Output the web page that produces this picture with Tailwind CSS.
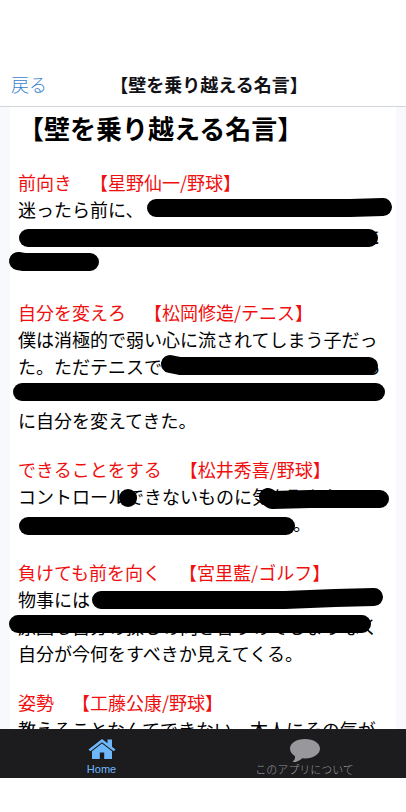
<!DOCTYPE html>
<html lang="ja">
  <head>
    <meta charset="UTF-8" />
    <meta name="viewport" content="width=device-width, initial-scale=1.0" />
    <title>【壁を乗り越える名言】</title>
    <script src="https://cdn.jsdelivr.net/npm/@tailwindcss/browser@4"></script>
  </head>
  <body class="bg-white font-['Noto_Sans_CJK_JP',sans-serif] text-black [text-spacing-trim:space-all]">
    <div class="flex h-screen flex-col pb-[34px]">
      <!-- Navigation bar -->
      <header class="grid grid-cols-[1fr_auto_1fr] items-center border-b border-gray-300 px-[11px] pt-[62px]">
        <a href="#" class="text-lg leading-[44px] font-light text-[#3b82d0]">戻る</a>
        <p class="pl-3 text-lg leading-[44px] font-bold text-[#111116]">【壁を乗り越える名言】</p>
      </header>

      <main class="flex-1 overflow-y-auto bg-[#f8f9fc] px-[10px] [scrollbar-width:none]">
        <article class="relative bg-white px-2 pb-6">
          <h1 class="text-[26px] leading-[42px] font-bold">【壁を乗り越える名言】</h1>

          <div class="mt-5 flex flex-col gap-[22px] text-lg leading-[27px] whitespace-nowrap">
            <section>
              <h2 class="text-[#f00f0f]">前向き　【星野仙一/野球】</h2>
              <p>
                迷ったら前に、<br />
                <span class="inline-block w-[344px]"></span>に<br />
                <br />
              </p>
            </section>
            <section>
              <h2 class="text-[#f00f0f]">自分を変えろ　【松岡修造/テニス】</h2>
              <p>
                僕は消極的で弱い心に流されてしまう子だっ<br />
                た。ただテニスで<span class="inline-block w-[201px]"></span>ら<br />
                <br />
                に自分を変えてきた。
              </p>
            </section>
            <section>
              <h2 class="text-[#f00f0f]">できることをする　【松井秀喜/野球】</h2>
              <p>
                コントロールできないものに気を取られ<br />
                <span class="inline-block w-[275px]"></span>。
              </p>
            </section>
            <section>
              <h2 class="text-[#f00f0f]">負けても前を向く　【宮里藍/ゴルフ】</h2>
              <p>
                物事には<br />
                原因も自分の探しの向き合うのでしょうなく<br />
                自分が今何をすべきか見えてくる。
              </p>
            </section>
            <section>
              <h2 class="text-[#f00f0f]">姿勢　【工藤公康/野球】</h2>
              <p>教えることなんてできない。本人にその気が</p>
            </section>
          </div>

          <!-- Marker strokes over the hidden parts -->
          <svg class="pointer-events-none absolute top-0 left-0 h-full w-full overflow-visible" fill="none" stroke="#000" stroke-width="18" stroke-linecap="round" stroke-linejoin="round" aria-hidden="true">
            <path d="M146 101H340L373 100" />
            <path d="M18 131H359" />
            <path d="M8 154L14 155H80" />
            <path d="M160 257L170 259H359" />
            <path d="M12 285H366" />
            <path d="M118 391h.1" />
            <path d="M258 390L262 393L300 392H370" />
            <path d="M18 419H276" />
            <path d="M91 493H275L325 491L364 490" />
            <path d="M8 517H352" />
          </svg>
        </article>
      </main>

      <!-- Tab bar -->
      <nav class="grid h-[49px] grid-cols-2 bg-[#1c1c1e] pt-[9px] text-[11px] leading-[14px]">
        <a href="#" class="flex flex-col items-center text-[#6fb7fb]">
          <svg class="h-6 w-7" viewBox="0 0 28 24" fill="currentColor" aria-hidden="true">
            <path d="M14 1L0.5 11.5L2.3 13.3L14 4.2L25.7 13.3L27.5 11.5L24 8.7V1.5H19.5V5.2Z" />
            <path d="M14 5.5L4 13.2V21H11.8V14.5H16.2V21H24V13.2Z" />
          </svg>
          <span class="font-['Liberation_Sans',sans-serif]">Home</span>
        </a>
        <a href="#" class="flex flex-col items-center text-[#98989c]">
          <svg class="h-6 w-8" viewBox="0 0 32 24" fill="currentColor" aria-hidden="true">
            <path d="M16 1C24.500 1 31 5.200 31 10.600C31 16.200 24.500 20.500 16 20.500L13.200 20.300C10.500 23 6.500 24.500 3 24.500C5.200 22.600 6.300 20.500 6 18.200C2.800 16.400 1 13.700 1 10.600C1 5.200 7.500 1 16 1Z" />
          </svg>
          <span class="font-light">このアプリについて</span>
        </a>
      </nav>
    </div>
  </body>
</html>
